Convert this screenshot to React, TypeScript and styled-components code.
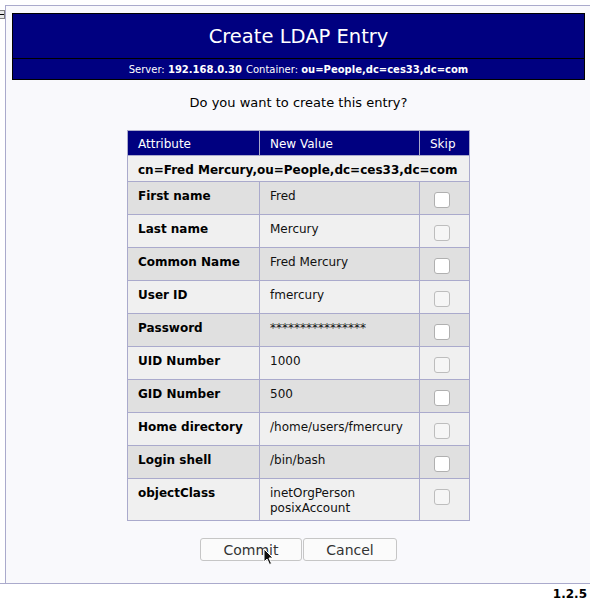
import React from "react";
import styled, { createGlobalStyle } from "styled-components";

const Global = createGlobalStyle`
  html, body { margin: 0; padding: 0; background: #ffffff; }
  body { font-family: "DejaVu Sans", Verdana, sans-serif; color: #000; }
`;

const Page = styled.div`
  padding-top: 5px;
  width: 590px;
`;

const Frame = styled.div`
  display: flex;
`;

const Toggle = styled.div`
  width: 5px;
  flex: none;
  position: relative;
`;

const ToggleBtn = styled.div`
  position: absolute;
  left: -4px;
  top: 5px;
  width: 7px;
  height: 7px;
  border: 1px solid #808080;
  background: #e8e8e8;
  display: flex;
  align-items: center;
  justify-content: center;
  &::after {
    content: "";
    width: 4px;
    height: 1px;
    background: #000;
    margin-left: 2px;
  }
`;

const Panel = styled.div`
  flex: 1;
  border-top: 1px solid #aaaacc;
  border-left: 1px solid #aaaacc;
  background: #f9f9fc;
  padding: 7px 5px 22px 6px;
  display: flex;
  flex-direction: column;
  align-items: center;
`;

const HeaderBox = styled.div`
  align-self: stretch;
  background: #000080;
  border: 1px solid #000;
  color: #fff;
`;

const Title = styled.div`
  height: 44px;
  display: flex;
  align-items: center;
  justify-content: center;
  font-size: 19.5px;
  padding-top: 1px;
  box-sizing: border-box;
`;

const SubTitle = styled.div`
  border-top: 1px solid #000;
  height: 21px;
  display: flex;
  align-items: center;
  justify-content: center;
  font-size: 10px;
  gap: 4px;
  padding-top: 1px;
  box-sizing: border-box;
  b { font-weight: bold; }
`;

const Question = styled.div`
  font-size: 13px;
  margin-top: 15px;
  line-height: 16px;
`;

const Table = styled.table`
  border-collapse: collapse;
  margin-top: 19px;
  font-size: 12px;
  table-layout: fixed;
  width: 342px;
  border: 1px solid #aaaacc;
  td, th { box-sizing: border-box; }
`;

const HeadCell = styled.th<{ $w: number }>`
  width: ${(p) => p.$w}px;
  background: #000080;
  color: #fff;
  font-weight: normal;
  text-align: left;
  padding: 6px 10px 3px 10px;
  line-height: 15px;
  border: 1px solid #aaaacc;
  border-top: none;
`;

const DnCell = styled.td`
  background: #f0f0f0;
  font-weight: bold;
  padding: 7px 10px 3px 10px;
  line-height: 15px;
  border: 1px solid #aaaacc;
  white-space: nowrap;
`;

const Row = styled.tr<{ $dark: boolean }>`
  height: 33px;
  background: ${(p) => (p.$dark ? "#e0e0e0" : "#f0f0f0")};
`;

const AttrCell = styled.td`
  font-weight: bold;
  vertical-align: top;
  padding: 7px 10px 4px 10px;
  line-height: 15px;
  border: 1px solid #aaaacc;
`;

const ValueCell = styled.td`
  vertical-align: top;
  padding: 7px 10px 4px 10px;
  line-height: 15px;
  border: 1px solid #aaaacc;
  color: #111;
`;

const SkipCell = styled.td`
  vertical-align: top;
  padding: 10px 0 0 14px;
  border: 1px solid #aaaacc;
`;

const Check = styled.span<{ $dark: boolean }>`
  display: block;
  width: 14px;
  height: 14px;
  border: 1px solid ${(p) => (p.$dark ? "#b0b0b0" : "#bdbdbd")};
  border-radius: 3px;
  background: ${(p) => (p.$dark ? "#ffffff" : "#f6f6f6")};
`;

const Buttons = styled.div`
  display: flex;
  gap: 1px;
  margin-top: 17px;
`;

const Button = styled.button<{ $w: number }>`
  width: ${(p) => p.$w}px;
  height: 23px;
  font-family: "DejaVu Sans", Verdana, sans-serif;
  font-size: 14px;
  color: #333;
  background: #fbfbfb;
  border: 1px solid #c6c6c6;
  border-radius: 3px;
  padding: 0;
  position: relative;
`;

const Cursor = styled.svg`
  position: absolute;
  left: 62px;
  top: 9px;
`;

const Footer = styled.div`
  border-top: 1px solid #aaaacc;
  text-align: right;
  font-size: 12px;
  font-weight: bold;
  padding: 3px 3px 0 0;
`;

type Entry = { name: string; values: string[] };

const entries: Entry[] = [
  { name: "First name", values: ["Fred"] },
  { name: "Last name", values: ["Mercury"] },
  { name: "Common Name", values: ["Fred Mercury"] },
  { name: "User ID", values: ["fmercury"] },
  { name: "Password", values: ["****************"] },
  { name: "UID Number", values: ["1000"] },
  { name: "GID Number", values: ["500"] },
  { name: "Home directory", values: ["/home/users/fmercury"] },
  { name: "Login shell", values: ["/bin/bash"] },
  { name: "objectClass", values: ["inetOrgPerson", "posixAccount"] },
];

export default function App() {
  return (
    <Page>
      <Global />
      <Frame>
        <Toggle>
          <ToggleBtn />
        </Toggle>
        <Panel>
          <HeaderBox>
            <Title>Create LDAP Entry</Title>
            <SubTitle>
              <span>
                Server: <b>192.168.0.30</b>
              </span>
              <span>
                Container: <b>ou=People,dc=ces33,dc=com</b>
              </span>
            </SubTitle>
          </HeaderBox>
          <Question>Do you want to create this entry?</Question>
          <Table>
            <thead>
              <tr>
                <HeadCell $w={132}>Attribute</HeadCell>
                <HeadCell $w={160}>New Value</HeadCell>
                <HeadCell $w={50}>Skip</HeadCell>
              </tr>
            </thead>
            <tbody>
              <tr>
                <DnCell colSpan={3}>cn=Fred Mercury,ou=People,dc=ces33,dc=com</DnCell>
              </tr>
              {entries.map((e, i) => {
                const dark = i % 2 === 0;
                return (
                  <Row key={e.name} $dark={dark}>
                    <AttrCell>{e.name}</AttrCell>
                    <ValueCell>
                      {e.values.map((v) => (
                        <div key={v}>{v}</div>
                      ))}
                    </ValueCell>
                    <SkipCell>
                      <Check $dark={dark} />
                    </SkipCell>
                  </Row>
                );
              })}
            </tbody>
          </Table>
          <Buttons>
            <Button $w={102}>
              Commit
              <Cursor width="12" height="18" viewBox="0 0 12 18">
                <path d="M1 1 L1 14 L4 11 L6.5 16.5 L8.5 15.5 L6 10 L10 10 Z" fill="#111" stroke="#fff" strokeWidth="1" />
              </Cursor>
            </Button>
            <Button $w={94}>Cancel</Button>
          </Buttons>
        </Panel>
      </Frame>
      <Footer>1.2.5</Footer>
    </Page>
  );
}
